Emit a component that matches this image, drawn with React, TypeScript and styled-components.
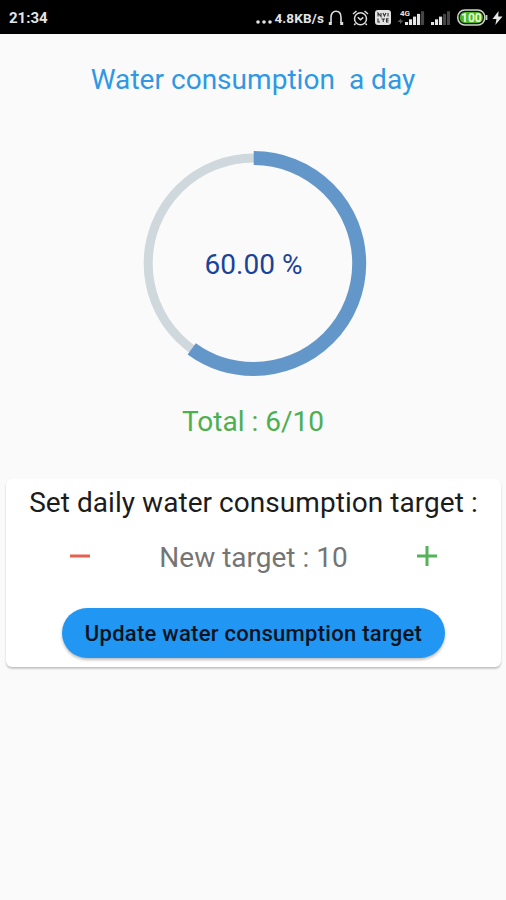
import React, { useState } from "react";
import styled, { createGlobalStyle } from "styled-components";

const GlobalStyle = createGlobalStyle`
  body {
    margin: 0;
    background: #fafafa;
    font-family: Roboto, "Liberation Sans", sans-serif;
  }
`;

const Screen = styled.div`
  display: flex;
  flex-direction: column;
  width: 506px;
  height: 900px;
  overflow: hidden;
  background: #fafafa;
`;

const StatusBar = styled.header`
  display: flex;
  align-items: center;
  flex: none;
  box-sizing: border-box;
  height: 34px;
  padding: 1px 3px 0 9px;
  background: #000;
  color: #e4e4e4;
`;

const Clock = styled.span`
  flex: 1;
  font-size: 15px;
  font-weight: 700;
`;

const Speed = styled.span`
  display: flex;
  align-items: center;
  font-size: 13.5px;
  font-weight: 700;
  letter-spacing: 0.15px;
  white-space: pre;
`;

const Dots = styled.svg`
  width: 18px;
  height: 16px;
`;

const StatusIcon = styled.svg<{ $gap: number }>`
  flex: none;
  display: block;
  margin-left: ${({ $gap }) => $gap}px;
`;

const Line = styled.div<{ $color: string; $top: number; $spacing?: number }>`
  height: 34px;
  margin-top: ${({ $top }) => $top}px;
  color: ${({ $color }) => $color};
  font-size: 28px;
  line-height: 34px;
  letter-spacing: ${({ $spacing = 0 }) => $spacing}px;
  text-align: center;
  white-space: pre;
`;

const Gauge = styled.div`
  display: grid;
  place-items: center;
  align-self: center;
  width: 226px;
  height: 226px;
  margin: 54px 0 0 2px;
  > * {
    grid-area: 1 / 1;
  }
`;

const Percent = styled.span`
  margin: 2px 1px 0 0;
  color: #1a429b;
  font-size: 28px;
  line-height: 34px;
`;

const Card = styled.section`
  display: flex;
  flex-direction: column;
  align-items: center;
  box-sizing: border-box;
  height: 188px;
  margin: 40px 5px 0 6px;
  border-radius: 6px;
  background: #fff;
  box-shadow: 0 2px 2px rgba(0, 0, 0, 0.18), 0 1px 2px rgba(0, 0, 0, 0.06);
`;

const Stepper = styled.div`
  display: flex;
  align-items: center;
  justify-content: space-between;
  width: 375px;
  height: 34px;
  margin-top: 20px;
`;

const Target = styled.span`
  padding-top: 1px;
  color: #757575;
  font-size: 28px;
  line-height: 34px;
`;

const StepButton = styled.button`
  display: grid;
  place-items: center;
  width: 28px;
  height: 34px;
  padding: 0 0 2px;
  border: 0;
  background: none;
`;

const UpdateButton = styled.button`
  width: 383px;
  height: 50px;
  flex: none;
  margin-top: 34px;
  padding: 1px 0 0;
  border: 0;
  border-radius: 25px;
  background: #2196f3;
  color: #07131f;
  box-shadow: 0 2px 3px rgba(0, 0, 0, 0.26);
  font-family: inherit;
  font-size: 22px;
  font-weight: 500;
  letter-spacing: 0.27px;
  white-space: nowrap;
`;

function Signal({ count, lit }: { count: number; lit: number }) {
  return (
    <>
      {Array.from({ length: count }, (_, i) => (
        <rect key={i} x={i * 4} y={11 - i * 2.7} width={3.1} height={3 + i * 2.7} fill={i < lit ? "#e6e6e6" : "#454545"} />
      ))}
    </>
  );
}

function StatusIcons() {
  return (
    <>
      <StatusIcon $gap={4} width="16" height="16" viewBox="0 0 16 16" fill="none" stroke="#ddd">
        <path d="M3 13V7.5C3 3.8 4.8 1.2 8 1.2s5 2.6 5 6.3V13" strokeWidth="1.6" />
        <path d="M.8 13.5h3M15.2 13.5h-3" strokeWidth="3" />
      </StatusIcon>
      <StatusIcon $gap={8} width="17" height="16" viewBox="0 0 17 16" fill="none" stroke="#ddd" strokeWidth="1.5">
        <circle cx="8.5" cy="8.7" r="6" />
        <path d="M1 4l3.5-3M16 4l-3.5-3M5.8 7.2l2.7 2.6 2.8-2.4M3.5 13.5l-1.3 1.5M13.5 13.5l1.3 1.5" />
      </StatusIcon>
      <StatusIcon $gap={6} width="16" height="15" viewBox="0 0 16 15">
        <rect width="16" height="15" rx="3" fill="#e2e2e2" />
        <path d="M3 6.5V3l3 3.5V3M8 3l1.4 3L11 3M13 3v3.5M3 8.5V12h2M6.5 9H10M8.3 9v3M13.5 8.8h-2V12h2M11.5 10.3h2" fill="none" stroke="#333" strokeWidth="1.1" />
      </StatusIcon>
      <StatusIcon $gap={6} width="28" height="17" viewBox="0 0 28 17">
        <text x="3" y="6.5" fill="#e4e4e4" fontSize="8" fontWeight="700">4G</text>
        <path d="M.5 13l3.5-3.5v2h2.5L3 15v-2z" fill="#5a5a5a" />
        <g transform="translate(8 2)"><Signal count={5} lit={4} /></g>
      </StatusIcon>
      <StatusIcon $gap={6} width="19" height="17" viewBox="0 0 19 17">
        <g transform="translate(0 2)"><Signal count={5} lit={3} /></g>
      </StatusIcon>
      <StatusIcon $gap={7} width="31" height="17" viewBox="0 0 31 17">
        <rect x=".8" y="1" width="27" height="15" rx="7" fill="#101510" stroke="#ccd5ca" strokeWidth="1.5" />
        <rect x="2.8" y="3" width="23" height="11" rx="5.3" fill="#4cb526" />
        <path d="M29.5 6v5" stroke="#ccc" strokeWidth="1.8" />
        <text x="14.4" y="12.8" textAnchor="middle" fill="#e2ffd8" fontSize="12" fontWeight="700">100</text>
      </StatusIcon>
      <StatusIcon $gap={4} width="11" height="14" viewBox="0 0 11 14">
        <path d="M6.6 0L.5 8h4L3.3 14 10.5 5.6H6.2z" fill="#e8e8e8" />
      </StatusIcon>
    </>
  );
}

export default function App() {
  const [target, setTarget] = useState(10);
  const [pending, setPending] = useState(10);
  const consumed = 6;
  const ratio = Math.min(1, consumed / target);

  return (
    <Screen>
      <GlobalStyle />
      <StatusBar>
        <Clock>21:34</Clock>
        <Speed>
          <Dots viewBox="0 0 18 16" fill="#e4e4e4">
            <circle cx="2" cy="12" r="1.8" />
            <circle cx="8" cy="12" r="1.8" />
            <circle cx="14" cy="12" r="1.8" />
          </Dots>
          4.8KB/s
        </Speed>
        <StatusIcons />
      </StatusBar>
      <Line $color="#2f98e5" $top={29} $spacing={0.03}>{"Water consumption  a day"}</Line>
      <Gauge>
        <svg width="226" height="226" viewBox="0 0 226 226" fill="none">
          <circle cx="112.7" cy="112.5" r="105.5" stroke="#cfd8dc" strokeWidth="9" />
          <circle
            cx="112.7"
            cy="112.5"
            r="105.5"
            stroke="#6497c9"
            strokeWidth="14"
            pathLength="100"
            strokeDasharray={`${ratio * 100} 100`}
            transform="rotate(-90 112.7 112.5)"
          />
        </svg>
        <Percent>{(ratio * 100).toFixed(2)} %</Percent>
      </Gauge>
      <Line $color="#4caf50" $top={28}>Total : {consumed}/{target}</Line>
      <Card>
        <Line $color="#1c1c1c" $top={7} $spacing={0.05}>Set daily water consumption target :</Line>
        <Stepper>
          <StepButton aria-label="Decrease" onClick={() => setPending(Math.max(1, pending - 1))}>
            <svg width="20" height="20" viewBox="0 0 20 20">
              <path d="M0 10h20" stroke="#e8604f" strokeWidth="3" />
            </svg>
          </StepButton>
          <Target>New target : {pending}</Target>
          <StepButton aria-label="Increase" onClick={() => setPending(pending + 1)}>
            <svg width="20" height="20" viewBox="0 0 20 20">
              <path d="M0 10h20M10 0v20" stroke="#55b25a" strokeWidth="3" />
            </svg>
          </StepButton>
        </Stepper>
        <UpdateButton onClick={() => setTarget(pending)}>Update water consumption target</UpdateButton>
      </Card>
    </Screen>
  );
}
